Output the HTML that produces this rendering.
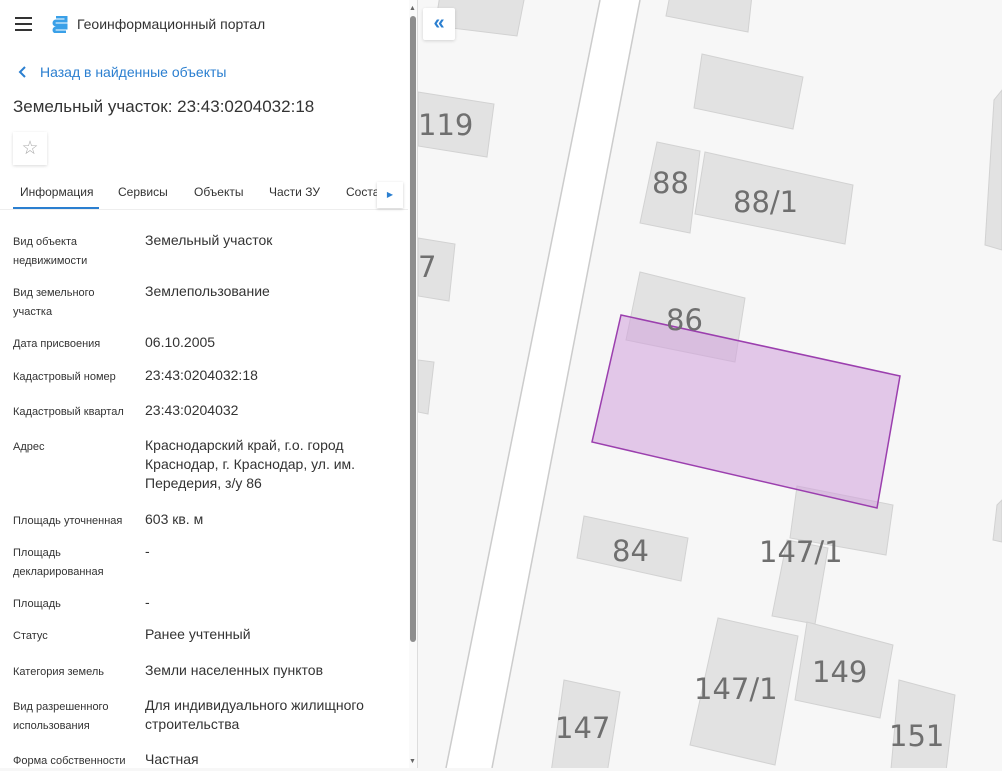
<!DOCTYPE html>
<html><head><meta charset="utf-8"><style>
*{margin:0;padding:0;box-sizing:border-box}
body{width:1002px;height:768px;overflow:hidden;position:relative;background:#f7f7f7;font-family:"Liberation Sans","DejaVu Sans",sans-serif}
#panel{position:absolute;left:0;top:0;width:418px;height:768px;background:#fff;border-right:1px solid #ddd}
.a{position:absolute;white-space:nowrap}
.l{position:absolute;left:13px;font-size:11px;color:#333;line-height:19px}
.v{position:absolute;left:145px;font-size:14px;color:#333;line-height:19px}
</style></head><body>
<svg class="a" style="left:0;top:0" width="1002" height="768">
<polygon points="600,0 640,0 492,768 446,768" fill="#fff"/>
<line x1="600" y1="0" x2="446" y2="768" stroke="#ccc" stroke-width="1.5"/>
<line x1="640" y1="0" x2="492" y2="768" stroke="#ccc" stroke-width="1.5"/>
<g fill="#e2e2e2" stroke="#d2d2d2">
<polygon points="440,-5 525,-5 517,36 435,26"/>
<polygon points="670,-5 752,-5 748,32 666,16"/>
<polygon points="702,54 803,77 793,129 694,108"/>
<polygon points="418,92 494,104 487,157 418,146"/>
<polygon points="657,142 700,151 690,233 640,223"/>
<polygon points="705,152 853,185 845,244 695,214"/>
<polygon points="418,238 455,244 449,301 418,296"/>
<polygon points="418,360 434,362 428,414 418,412"/>
<polygon points="640,272 745,298 735,362 626,340"/>
<polygon points="584,516 688,538 681,581 577,558"/>
<polygon points="797,486 893,505 886,555 790,538"/>
<polygon points="787,540 828,548 815,624 772,616"/>
<polygon points="718,618 798,636 775,765 690,745"/>
<polygon points="807,622 893,645 880,718 795,700"/>
<polygon points="564,680 620,692 606,780 550,780"/>
<polygon points="899,680 955,695 945,780 890,780"/>
<polygon points="1002,90 994,100 985,245 1002,250"/>
<polygon points="1002,500 997,505 993,540 1002,542"/>
</g>
<polygon points="621,315 900,376 877,508 592,442" fill="rgba(210,160,220,0.55)" stroke="#9b3fae" stroke-width="1.5"/>
<g font-family="DejaVu Sans,sans-serif" fill="#6f6f6f" font-size="29">
<text x="418" y="135">119</text>
<text x="652" y="193">88</text>
<text x="733" y="212">88/1</text>
<text x="418" y="277">7</text>
<text x="666" y="330">86</text>
<text x="612" y="561">84</text>
<text x="759" y="562">147/1</text>
<text x="694" y="699">147/1</text>
<text x="812" y="682">149</text>
<text x="555" y="738">147</text>
<text x="889" y="746">151</text>
</g>
</svg>
<div class="a" style="left:423px;top:8px;width:32px;height:32px;background:#fff;border-radius:2px;box-shadow:0 1px 3px rgba(0,0,0,.15);color:#2b7fd0;font-size:20px;font-weight:bold;text-align:center;line-height:30px">«</div>
<div id="panel">
<svg class="a" style="left:15px;top:17px" width="18" height="14"><rect y="0" width="17" height="2" fill="#333"/><rect y="6" width="17" height="2" fill="#333"/><rect y="12" width="17" height="2" fill="#333"/></svg>
<svg class="a" style="left:51px;top:16px" width="17" height="17"><path d="M5 1h10v4H5a2 2 0 0 0 0 4h10v3H5a2 2 0 0 0 0 4h10" fill="none" stroke="#3aa0e8" stroke-width="3"/></svg>
<div class="a" style="left:77px;top:16px;font-size:14px;color:#333">Геоинформационный портал</div>
<svg class="a" style="left:18px;top:66px" width="10" height="12"><path d="M7 1L2 6l5 5" fill="none" stroke="#2b7fd0" stroke-width="2"/></svg>
<div class="a" style="left:40px;top:64px;font-size:14px;color:#2b7fd0">Назад в найденные объекты</div>
<div class="a" style="left:13px;top:97px;font-size:17px;color:#333">Земельный участок: 23:43:0204032:18</div>
<div class="a" style="left:13px;top:132px;width:34px;height:33px;background:#fff;box-shadow:0 1px 3px rgba(0,0,0,.15);color:#aaa;font-size:19px;text-align:center;line-height:33px">☆</div>
<div class="a" style="left:20px;top:185px;font-size:12px;color:#333">Информация</div>
<div class="a" style="left:13px;top:207px;width:86px;height:2px;background:#2b7fd0"></div>
<div class="a" style="left:0;top:209px;width:408px;height:1px;background:#eee"></div>
<div class="a" style="left:118px;top:185px;font-size:12px;color:#333">Сервисы</div>
<div class="a" style="left:194px;top:185px;font-size:12px;color:#333">Объекты</div>
<div class="a" style="left:269px;top:185px;font-size:12px;color:#333">Части ЗУ</div>
<div class="a" style="left:346px;top:185px;font-size:12px;color:#333">Соста</div>
<div class="a" style="left:377px;top:182px;width:26px;height:26px;background:#fff;box-shadow:0 1px 3px rgba(0,0,0,.2);color:#2b7fd0;font-size:8px;text-align:center;line-height:26px">▶</div>
<div class="l" style="top:233px">Вид объекта<br>недвижимости</div><div class="v" style="top:231px">Земельный участок</div>
<div class="l" style="top:284px">Вид земельного<br>участка</div><div class="v" style="top:282px">Землепользование</div>
<div class="l" style="top:335px">Дата присвоения</div><div class="v" style="top:333px">06.10.2005</div>
<div class="l" style="top:368px">Кадастровый номер</div><div class="v" style="top:366px">23:43:0204032:18</div>
<div class="l" style="top:403px">Кадастровый квартал</div><div class="v" style="top:401px">23:43:0204032</div>
<div class="l" style="top:438px">Адрес</div><div class="v" style="top:436px">Краснодарский край, г.о. город<br>Краснодар, г. Краснодар, ул. им.<br>Передерия, з/у 86</div>
<div class="l" style="top:512px">Площадь уточненная</div><div class="v" style="top:510px">603 кв. м</div>
<div class="l" style="top:544px">Площадь<br>декларированная</div><div class="v" style="top:542px">-</div>
<div class="l" style="top:595px">Площадь</div><div class="v" style="top:593px">-</div>
<div class="l" style="top:627px">Статус</div><div class="v" style="top:625px">Ранее учтенный</div>
<div class="l" style="top:663px">Категория земель</div><div class="v" style="top:661px">Земли населенных пунктов</div>
<div class="l" style="top:698px">Вид разрешенного<br>использования</div><div class="v" style="top:696px">Для индивидуального жилищного<br>строительства</div>
<div class="l" style="top:752px">Форма собственности</div><div class="v" style="top:750px">Частная</div>
<div class="a" style="left:409px;top:0;width:8px;height:768px;background:#fafafa"></div>
<div class="a" style="left:410px;top:16px;width:6px;height:626px;background:#8e8e8e;border-radius:3px"></div>
<div class="a" style="left:409px;top:5px;font-size:7px;color:#666">▲</div>
<div class="a" style="left:409px;top:758px;font-size:7px;color:#666">▼</div>
</div>
</body></html>
